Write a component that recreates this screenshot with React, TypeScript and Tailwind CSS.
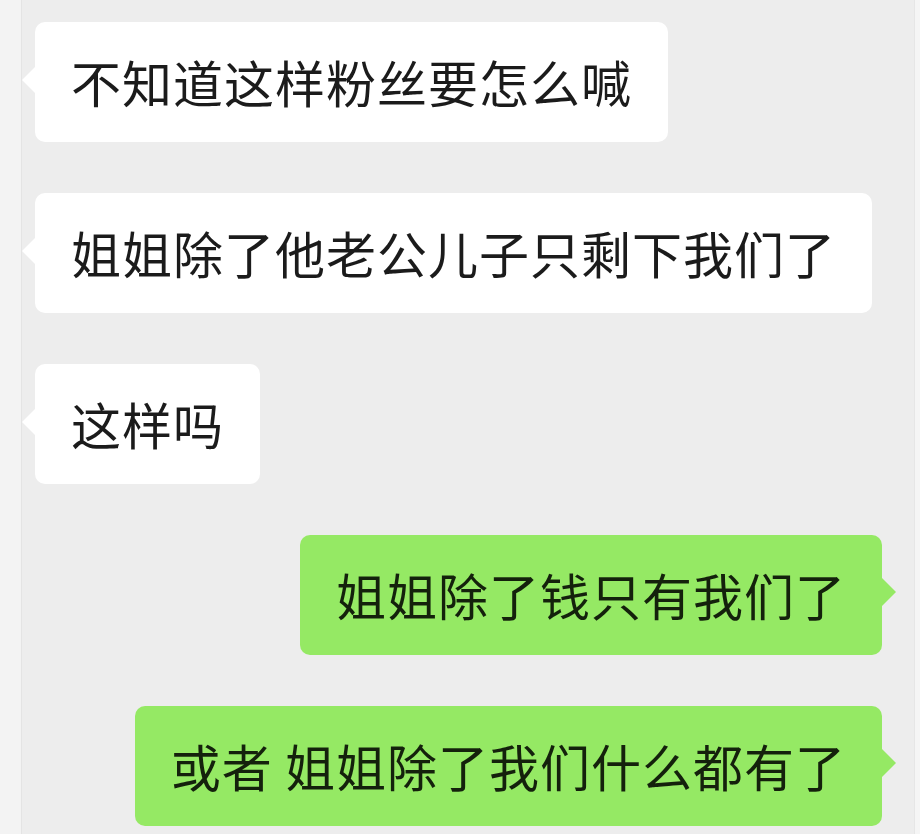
const font = { fontFamily: '"Noto Sans CJK SC", "Noto Sans", sans-serif' };

type Msg = { text: string; mine?: boolean };

const messages: Msg[] = [
  { text: "不知道这样粉丝要怎么喊" },
  { text: "姐姐除了他老公儿子只剩下我们了" },
  { text: "这样吗" },
  { text: "姐姐除了钱只有我们了", mine: true },
  { text: "或者 姐姐除了我们什么都有了", mine: true },
];

const Bubble = ({ text, mine }: Msg) => (
  <div className={mine ? "flex justify-end pr-[32px]" : "flex justify-start pl-[13px]"}>
    <div
      className={
        "relative flex h-[120px] items-center rounded-[10px] px-[36px] pb-[3px] text-[50px] leading-none tracking-[1px] whitespace-pre " +
        (mine ? "bg-[#95e964] text-[#14210c]" : "bg-white text-[#1b1b1b]")
      }
    >
      {mine ? (
        <span className="absolute right-[-14px] top-[42px] h-0 w-0 border-y-[15px] border-l-[15px] border-y-transparent border-l-[#95e964]" />
      ) : (
        <span className="absolute left-[-13px] top-[44px] h-0 w-0 border-y-[14px] border-r-[14px] border-y-transparent border-r-white" />
      )}
      {text}
    </div>
  </div>
);

export default function App() {
  return (
    <div className="flex h-[834px] w-[920px] overflow-hidden bg-[#ededed]" style={font}>
      <div className="w-[22px] border-r border-[#e4e4e4] bg-[#f3f3f3]" />
      <div className="flex flex-1 flex-col gap-[51px] pt-[22px]">
        {messages.map((m, i) => (
          <Bubble key={i} {...m} />
        ))}
      </div>
      <div className="w-[6px] border-l border-[#e6e6e6] bg-[#f5f5f5]" />
    </div>
  );
}
